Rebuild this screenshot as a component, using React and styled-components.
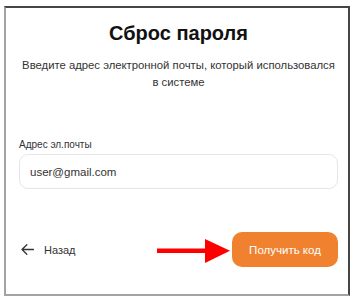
import React, { useState } from 'react';
import styled, { createGlobalStyle } from 'styled-components';

const GlobalStyle = createGlobalStyle`
  * { box-sizing: border-box; }
  body {
    margin: 0;
    background: #fff;
    font-family: "Liberation Sans", Arial, sans-serif;
    color: #222;
  }
`;

const Frame = styled.div`
  position: relative;
  margin: 6px 0 0 4px;
  width: 346px;
  height: 290px;
  border-top: 2px solid #454545;
  border-right: 2px solid #454545;
  border-left: 2px solid #a3a3a3;
  border-bottom: 2px solid #a3a3a3;
  padding: 13px 10px 0 13px;
  display: flex;
  flex-direction: column;
`;

const Title = styled.h1`
  margin: 0;
  font-size: 20px;
  line-height: 24px;
  font-weight: 700;
  text-align: center;
  color: #111;
`;

const Subtitle = styled.p`
  margin: 12px -8px 0;
  font-size: 11.3px;
  line-height: 17px;
  text-align: center;
  color: #333;
`;

const SubtitleLine = styled.span`
  display: block;
  white-space: nowrap;
`;

const Field = styled.label`
  margin-top: 48px;
  display: flex;
  flex-direction: column;
  gap: 3px;
`;

const Label = styled.span`
  font-size: 10px;
  line-height: 12px;
  color: #333;
`;

const Input = styled.input`
  height: 35px;
  width: 100%;
  border: 1px solid #e6e6e6;
  border-radius: 9px;
  padding: 0 10px;
  font-family: inherit;
  font-size: 11.5px;
  color: #333;
  outline: none;
`;

const Actions = styled.div`
  margin-top: 43px;
  display: flex;
  align-items: center;
  justify-content: space-between;
`;

const BackButton = styled.button`
  display: flex;
  align-items: center;
  gap: 10px;
  margin-left: 2px;
  padding: 0;
  border: 0;
  background: none;
  font-family: inherit;
  font-size: 11px;
  color: #333;
  cursor: pointer;
`;

const SubmitButton = styled.button`
  width: 106px;
  height: 35px;
  border: 0;
  border-radius: 10px;
  background: #f0812f;
  color: #fff;
  font-family: inherit;
  font-size: 11.5px;
  cursor: pointer;
`;

const Pointer = styled.svg`
  position: absolute;
  left: 151px;
  top: 230px;
`;

const App = () => {
  const [email, setEmail] = useState('user@gmail.com');

  return (
    <>
      <GlobalStyle />
      <Frame>
        <Title>Сброс пароля</Title>
        <Subtitle>
          <SubtitleLine>Введите адрес электронной почты, который использовался</SubtitleLine>
          <SubtitleLine>в системе</SubtitleLine>
        </Subtitle>
        <Field>
          <Label>Адрес эл.почты</Label>
          <Input value={email} onChange={(e) => setEmail(e.target.value)} />
        </Field>
        <Actions>
          <BackButton>
            <svg width="13" height="11" viewBox="0 0 13 11" fill="none">
              <path d="M12.5 5.5H1M5.8 0.8L1 5.5l4.8 4.7" stroke="#333" strokeWidth="1.3" strokeLinecap="round" strokeLinejoin="round" />
            </svg>
            Назад
          </BackButton>
          <SubmitButton>Получить код</SubmitButton>
        </Actions>
        <Pointer width="74" height="26" viewBox="0 0 74 26">
          <rect x="0" y="10.5" width="50" height="4.5" fill="#f00" />
          <polygon points="48,1 73,12.8 48,25" fill="#f00" />
        </Pointer>
      </Frame>
    </>
  );
};

export default App;
